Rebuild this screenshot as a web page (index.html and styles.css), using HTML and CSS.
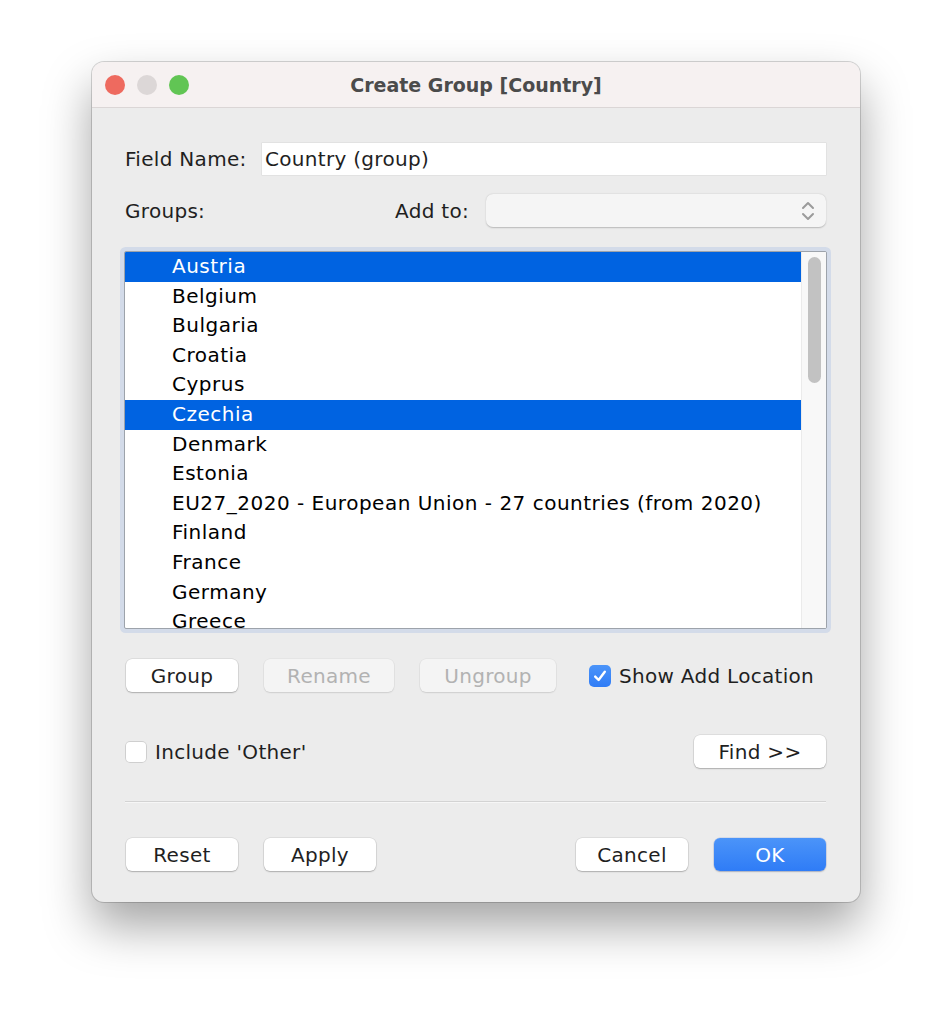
FILE: index.html
```html
<!DOCTYPE html>
<html lang="en">

<head>
     <meta charset="UTF-8">
     <title>Create Group [Country]</title>
     <meta name="viewport" content="width=device-width, initial-scale=1.0">
     <link rel="stylesheet" href="styles.css">
</head>

<body>

     <div class="window">
          <div class="titlebar">
               <div class="lights">
                    <span class="light red"></span>
                    <span class="light gray"></span>
                    <span class="light green"></span>
               </div>
               <div class="title">Create Group [Country]</div>
          </div>

          <div class="content">
               <div class="row field-row">
                    <label class="label">Field Name:</label>
                    <div class="text-input">Country (group)</div>
               </div>

               <div class="row groups-row">
                    <label class="label">Groups:</label>
                    <label class="label add-label">Add to:</label>
                    <div class="select">
                         <svg width="14" height="22" viewBox="0 0 14 22">
                              <path d="M2 8 L7 3 L12 8" fill="none" stroke="#9b9b9b" stroke-width="2" stroke-linecap="round" stroke-linejoin="round" />
                              <path d="M2 14 L7 19 L12 14" fill="none" stroke="#9b9b9b" stroke-width="2" stroke-linecap="round" stroke-linejoin="round" />
                         </svg>
                    </div>
               </div>

               <div class="list">
                    <ul class="items">
                         <li class="selected">Austria</li>
                         <li>Belgium</li>
                         <li>Bulgaria</li>
                         <li>Croatia</li>
                         <li>Cyprus</li>
                         <li class="selected">Czechia</li>
                         <li>Denmark</li>
                         <li>Estonia</li>
                         <li>EU27_2020 - European Union - 27 countries (from 2020)</li>
                         <li>Finland</li>
                         <li>France</li>
                         <li>Germany</li>
                         <li>Greece</li>
                    </ul>
                    <div class="scrollbar">
                         <div class="thumb"></div>
                    </div>
               </div>

               <div class="row actions-row">
                    <button class="btn w112">Group</button>
                    <button class="btn w130" disabled>Rename</button>
                    <button class="btn w136" disabled>Ungroup</button>
                    <div class="check">
                         <span class="box checked">
                              <svg width="16" height="16" viewBox="0 0 16 16">
                                   <path d="M3.2 8.6 L6.6 12 L12.8 3.8" fill="none" stroke="white" stroke-width="2.4" stroke-linecap="round" stroke-linejoin="round" />
                              </svg>
                         </span>
                         Show Add Location
                    </div>
               </div>

               <div class="row other-row">
                    <div class="check">
                         <span class="box"></span>
                         Include 'Other'
                    </div>
                    <button class="btn w132">Find &gt;&gt;</button>
               </div>

               <div class="separator"></div>

               <div class="row bottom-row">
                    <button class="btn w112">Reset</button>
                    <button class="btn w112">Apply</button>
                    <div class="spacer"></div>
                    <button class="btn w112">Cancel</button>
                    <button class="btn w112 primary">OK</button>
               </div>
          </div>
     </div>

</body>

</html>
```

FILE: styles.css
```css
:root {
     --window: #ececec;
     --titlebar: #f6f1f1;
     --select-blue: #0063e1;
     --text: #1f1f1f;
}

* {
     box-sizing: border-box;
     margin: 0;
     padding: 0;
}

body {
     font-family: 'DejaVu Sans', 'Liberation Sans', sans-serif;
     font-size: 20px;
     letter-spacing: 0.3px;
     background: #ffffff;
     color: var(--text);
     min-height: 100vh;
}

.window {
     width: 768px;
     height: 840px;
     margin: 62px 0 0 92px;
     background: var(--window);
     border-radius: 12px;
     overflow: hidden;
     box-shadow: 0 0 0 1px rgba(0, 0, 0, 0.16), 0 24px 48px rgba(0, 0, 0, 0.36);
}

.titlebar {
     height: 46px;
     background: var(--titlebar);
     border-bottom: 1px solid #dbd6d6;
     display: flex;
     align-items: center;
     position: relative;
}

.lights {
     display: flex;
     gap: 12px;
     padding-left: 13px;
}

.light {
     width: 20px;
     height: 20px;
     border-radius: 50%;
}

.red {
     background: #ee6a5f;
}

.gray {
     background: #dcd7d7;
}

.green {
     background: #61c554;
}

.title {
     position: absolute;
     left: 0;
     right: 0;
     text-align: center;
     font-weight: bold;
     font-size: 19px;
     letter-spacing: 0;
     color: #4b4b4b;
     pointer-events: none;
}

.content {
     padding: 35px 34px 0 33px;
     display: flex;
     flex-direction: column;
}

.row {
     display: flex;
     align-items: center;
}

.label {
     color: var(--text);
}

.field-row .label {
     width: 137px;
}

.text-input {
     flex: 1;
     height: 32px;
     background: white;
     padding-left: 3px;
     line-height: 32px;
     box-shadow: 0 0 0 0.5px rgba(0, 0, 0, 0.08);
}

.groups-row {
     margin-top: 19px;
}

.add-label {
     margin-left: auto;
     margin-right: 17px;
}

.select {
     width: 340px;
     height: 33px;
     background: #f5f5f5;
     border-radius: 7px;
     box-shadow: 0 0.5px 1.5px rgba(0, 0, 0, 0.22);
     display: flex;
     align-items: center;
     justify-content: flex-end;
     padding-right: 11px;
}

.list {
     margin: 24px -1px 0 -1px;
     height: 378px;
     border: 1px solid #9da3ab;
     box-shadow: 0 0 0 4px #d3dbe9;
     border-radius: 2px;
     background: white;
     display: flex;
     overflow: hidden;
}

.items {
     flex: 1;
     list-style: none;
     overflow: hidden;
}

.items li {
     height: 29.6px;
     line-height: 29.6px;
     padding-left: 47px;
     letter-spacing: 0.5px;
     color: #000;
     white-space: nowrap;
}

.items li.selected {
     background: var(--select-blue);
     color: white;
}

.scrollbar {
     width: 25px;
     background: #f8f8f8;
     border-left: 1px solid #ebebeb;
     padding: 5px 0 0 6px;
}

.thumb {
     width: 13px;
     height: 126px;
     border-radius: 7px;
     background: #c2c2c2;
}

.actions-row {
     margin-top: 30px;
     gap: 26px;
}

.btn {
     height: 33px;
     font-family: inherit;
     font-size: 20px;
     letter-spacing: 0.3px;
     color: var(--text);
     background: white;
     border: none;
     border-radius: 6px;
     box-shadow: 0 0 0 0.5px rgba(0, 0, 0, 0.12), 0 1px 1.5px rgba(0, 0, 0, 0.22);
}

.btn:disabled {
     background: #f4f4f4;
     color: #b2b2b2;
     box-shadow: 0 0 0 0.5px rgba(0, 0, 0, 0.06), 0 1px 1.5px rgba(0, 0, 0, 0.1);
}

.btn.primary {
     background: linear-gradient(#4b94f9, #2f7cf6);
     color: white;
     box-shadow: 0 0 0 0.5px rgba(0, 60, 200, 0.2), 0 1px 1.5px rgba(0, 0, 0, 0.2);
}

.w112 {
     width: 112px;
}

.w130 {
     width: 130px;
}

.w136 {
     width: 136px;
}

.w132 {
     width: 132px;
}

.actions-row .btn:first-child,
.bottom-row .btn:first-child {
     margin-left: 1px;
}

.check {
     display: flex;
     align-items: center;
     gap: 8px;
     color: var(--text);
}

.actions-row .check {
     margin-left: 7px;
}

.box {
     width: 22px;
     height: 22px;
     border-radius: 5px;
     background: white;
     box-shadow: inset 0 0 0 1px #cfcfcf;
     display: flex;
     align-items: center;
     justify-content: center;
}

.box.checked {
     background: linear-gradient(#4b94f9, #2f7cf6);
     box-shadow: none;
}

.other-row {
     margin-top: 43px;
     justify-content: space-between;
}

.separator {
     margin-top: 33px;
     height: 2px;
     background: #d3d3d3;
     border-bottom: 1px solid #f6f6f6;
}

.bottom-row {
     margin-top: 35px;
     gap: 26px;
}

.spacer {
     flex: 1;
}
```
